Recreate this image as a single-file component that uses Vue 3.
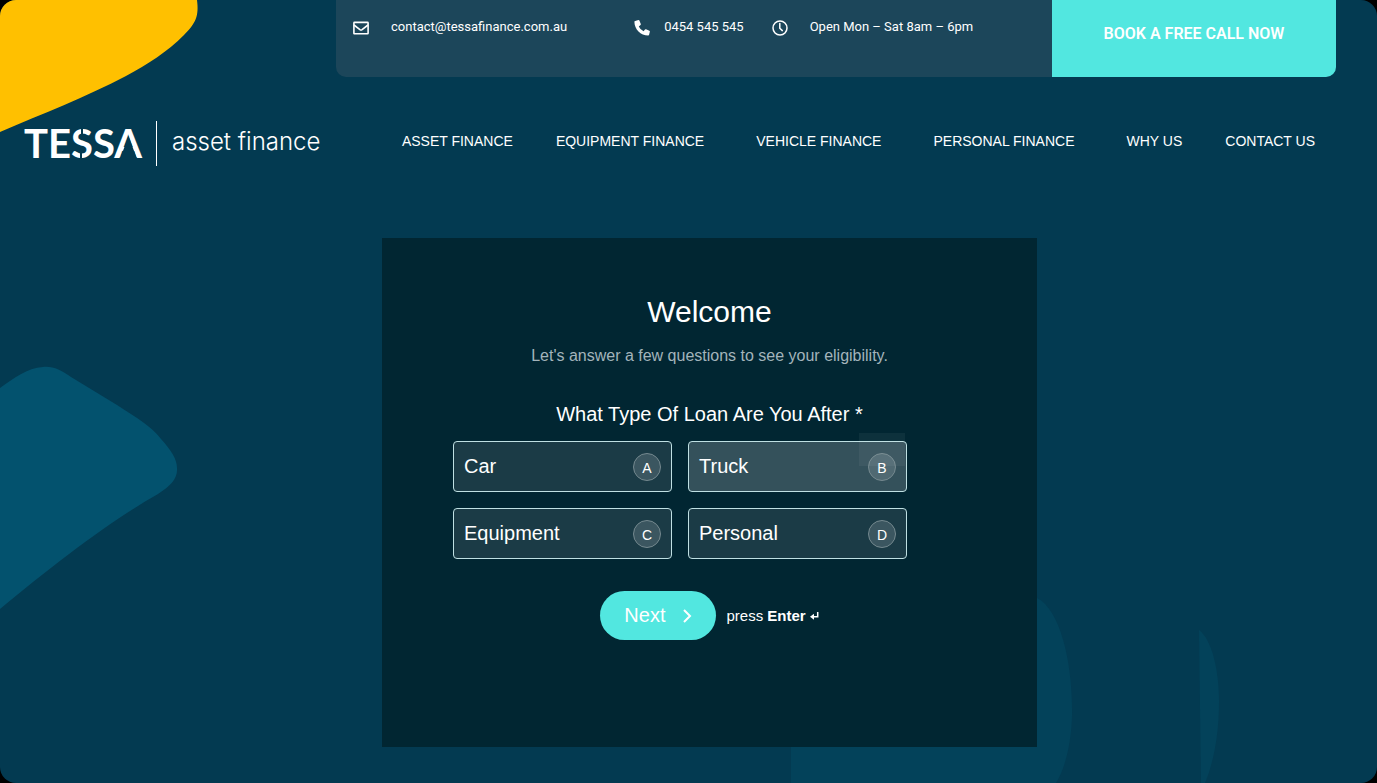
<script setup>
import { ref } from 'vue'

const links = [
  { label: 'ASSET FINANCE' },
  { label: 'EQUIPMENT FINANCE', wide: true },
  { label: 'VEHICLE FINANCE', wide: true },
  { label: 'PERSONAL FINANCE', wide: true },
  { label: 'WHY US' },
  { label: 'CONTACT US' },
]
const options = [
  { key: 'A', label: 'Car' },
  { key: 'B', label: 'Truck' },
  { key: 'C', label: 'Equipment' },
  { key: 'D', label: 'Personal' },
]
const chosen = ref('Truck')
</script>

<template>
  <div class="page">
    <svg class="shape shape-sun" width="200" height="134" viewBox="0 0 200 134" aria-hidden="true">
      <path d="M0 0H197C199 16 196 23 184 35C167 52 148 64 126 76C86 97 42 114 0 132Z" fill="#ffc000" />
    </svg>
    <svg class="shape shape-left" width="180" height="246" viewBox="0 0 180 246" aria-hidden="true">
      <path d="M0 24C14 14 27 4 43 3C53 2 61 6 71 13L117 41C137 54 151 62 161 75C171 86 177 95 177 104C178 114 171 122 158 130C112 156 54 200 0 245Z" fill="#03526e" />
    </svg>
    <svg class="shape shape-low" width="432" height="193" viewBox="0 0 432 193" aria-hidden="true">
      <path d="M3 193V40H200L249 8C273 20 285 75 284 126C283 158 276 180 268 193Z" fill="#03425a" />
      <path d="M411 40C424 50 431 80 431 112C431 146 425 174 417 193H413Z" fill="#03425a" />
    </svg>

    <header>
      <div class="topbar">
        <div class="contacts">
          <a class="contact mail" href="#">
            <svg width="16" height="16" viewBox="0 0 16 16" fill="none" stroke="#fff" stroke-width="1.6" stroke-linejoin="round" aria-hidden="true">
              <rect x="0.9" y="2.4" width="14.2" height="11.4" rx="0.6" />
              <path d="M1 5L6.9 9.6Q8 10.4 9.1 9.6L15 5" />
            </svg>
            <span>contact@tessafinance.com.au</span>
          </a>
          <a class="contact phone" href="#">
            <svg width="16" height="16" viewBox="0 0 16 16" aria-hidden="true">
              <path d="M1.2 .9L4.4 .1Q5.1 0 5.4 .6L6.8 4Q7 4.6 6.5 5L4.8 6.4Q6.2 9.6 9.6 11.2L11 9.5Q11.4 9 12 9.2L15.4 10.7Q16 11 15.9 11.6L15.1 14.8Q14.9 15.6 14.2 15.6C6.7 15.6 .4 9.3 .4 1.8Q.4 1.1 1.2 .9Z" fill="#fff" />
            </svg>
            <span>0454 545 545</span>
          </a>
          <div class="contact hours">
            <svg width="16" height="16" viewBox="0 0 16 16" fill="none" stroke="#fff" stroke-width="1.5" aria-hidden="true">
              <circle cx="8" cy="8" r="7" />
              <path d="M7.8 3.6V8.2L10.3 10.6" stroke-linecap="round" />
            </svg>
            <span>Open Mon – Sat 8am – 6pm</span>
          </div>
        </div>
        <a class="book" href="#">BOOK A FREE CALL NOW</a>
      </div>

      <div class="mainbar">
        <a class="logo" href="#">
          <span class="brand">TESSA
            <svg class="cuts" width="118" height="46" viewBox="0 0 118 46" fill="none" stroke="#033a51" aria-hidden="true">
              <path d="M96 39L104.5 16L113 39Z" fill="#033a51" stroke="none" />
              <path d="M58 7V15M57 32V40M73 28L78 31" stroke-width="2" />
            </svg>
          </span>
          <span class="rule"></span>
          <span class="tagline">asset finance</span>
        </a>
        <nav>
          <a v-for="l in links" :key="l.label" href="#" :class="{ wide: l.wide }">{{ l.label }}</a>
        </nav>
      </div>
    </header>

    <main>
      <form class="card" @submit.prevent>
        <h1>Welcome</h1>
        <p class="intro">Let's answer a few questions to see your eligibility.</p>
        <fieldset>
          <legend>What Type Of Loan Are You After *</legend>
          <div class="options">
            <label v-for="o in options" :key="o.key" class="option" :class="{ on: chosen === o.label }">
              <input v-model="chosen" type="radio" name="loan" :value="o.label" />
              <span>{{ o.label }}</span>
              <span class="key">{{ o.key }}</span>
            </label>
          </div>
        </fieldset>
        <div class="actions">
          <button type="submit">
            Next
            <svg width="10" height="16" viewBox="0 0 10 16" fill="none" stroke="#fff" stroke-width="2" aria-hidden="true">
              <path d="M2 2L8 8L2 14" />
            </svg>
          </button>
          <span class="hint">press <b>Enter</b>
            <svg width="9" height="10" viewBox="0 0 9 10" aria-hidden="true">
              <path d="M7.7 1V5.8H2.5" fill="none" stroke="#fff" stroke-width="1.5" />
              <path d="M0 5.8L4 2.8V8.8Z" fill="#fff" />
            </svg>
          </span>
        </div>
      </form>
    </main>
  </div>
</template>

<style>
body {
  margin: 0;
  background: #000;
}
</style>

<style scoped>
* {
  box-sizing: border-box;
}
.page {
  position: relative;
  min-height: 100vh;
  overflow: hidden;
  border-radius: 16px;
  background: #033a51;
  color: #fff;
  font-family: "Liberation Sans", Arial, sans-serif;
}
a {
  color: inherit;
  text-decoration: none;
}
.shape {
  position: absolute;
}
.shape-sun {
  top: 0;
  left: 0;
}
.shape-left {
  top: 364px;
  left: 0;
}
.shape-low {
  right: 157px;
  bottom: 0;
}
header,
main {
  position: relative;
}
.topbar {
  display: flex;
  height: 77px;
  margin: 0 41px 0 336px;
  border-radius: 0 0 10px 10px;
  overflow: hidden;
  background: #1c465a;
  font-family: Roboto, sans-serif;
}
.contacts {
  flex: 1;
  display: flex;
  padding: 18px 17px;
  font-size: 13px;
  line-height: 18px;
}
.contact {
  display: flex;
  align-items: flex-start;
  white-space: nowrap;
}
.contact svg {
  margin-top: 2px;
}
.mail {
  gap: 22px;
  margin-right: 67px;
}
.phone {
  gap: 14px;
  margin-right: 28px;
}
.hours {
  gap: 22px;
}
.book {
  width: 284px;
  padding-top: 22px;
  background: #52e7e0;
  text-align: center;
  font-size: 16px;
  line-height: 24px;
  font-weight: 600;
}
.mainbar {
  display: flex;
  justify-content: space-between;
  align-items: center;
  height: 46px;
  margin: 43px 62px 0 24px;
}
.logo {
  display: flex;
  align-items: center;
}
.brand {
  position: relative;
  width: 118px;
  font: 700 40px/46px Lato, sans-serif;
}
.cuts {
  position: absolute;
  top: 0;
  left: 0;
}
.rule {
  width: 1px;
  height: 45px;
  margin: 0 15px 0 14px;
  background: #fff;
}
.tagline {
  padding-bottom: 2px;
  font: 300 24px/32px Inter, sans-serif;
}
nav {
  display: flex;
  gap: 43px;
  font-size: 14px;
  line-height: 20px;
  padding-bottom: 4px;
  white-space: nowrap;
}
.wide {
  margin-right: 9px;
}
main {
  display: flex;
  justify-content: center;
  padding: 72px 0 36px 42px;
}
.card {
  flex: 0 1 655px;
  padding: 56px 71px 107px;
  background: #012632;
}
h1 {
  margin: 0;
  font-weight: 400;
  font-size: 30px;
  line-height: 36px;
  text-align: center;
}
.intro {
  margin: 16px 0 0;
  color: #a3b4bb;
  font-size: 16px;
  line-height: 20px;
  text-align: center;
}
fieldset {
  min-width: 0;
  margin: 36px 0 0;
  padding: 0;
  border: 0;
}
legend {
  width: 100%;
  padding: 0 0 15px;
  font-size: 20px;
  line-height: 24px;
  text-align: center;
}
.options {
  display: grid;
  grid-template-columns: 1fr 1fr;
  gap: 16px;
  max-width: 454px;
}
.option {
  position: relative;
  display: flex;
  align-items: center;
  justify-content: space-between;
  height: 51px;
  padding: 0 10px;
  border: 1px solid #bfe0e3;
  border-radius: 4px;
  background: #1b3b46;
  font-size: 20px;
}
.option.on {
  background: #34515b;
}
.option.on::after {
  content: "";
  position: absolute;
  top: -9px;
  right: 1px;
  width: 46px;
  height: 33px;
  background: rgba(255, 255, 255, 0.05);
}
.option input {
  position: absolute;
  opacity: 0;
}
.key {
  display: flex;
  align-items: center;
  justify-content: center;
  width: 28px;
  height: 28px;
  padding-top: 2px;
  border: 1px solid #75898f;
  border-radius: 50%;
  background: rgba(255, 255, 255, 0.14);
  font-size: 14px;
}
.actions {
  display: flex;
  align-items: center;
  justify-content: center;
  gap: 10px;
  margin-top: 32px;
}
button {
  display: flex;
  align-items: center;
  gap: 17px;
  height: 49px;
  padding: 0 24px;
  border: 0;
  border-radius: 25px;
  background: #52e7e0;
  color: #fff;
  font: 20px "Liberation Sans", Arial, sans-serif;
}
.hint {
  font-size: 15px;
}
.hint svg {
  margin-left: 4px;
}
</style>
